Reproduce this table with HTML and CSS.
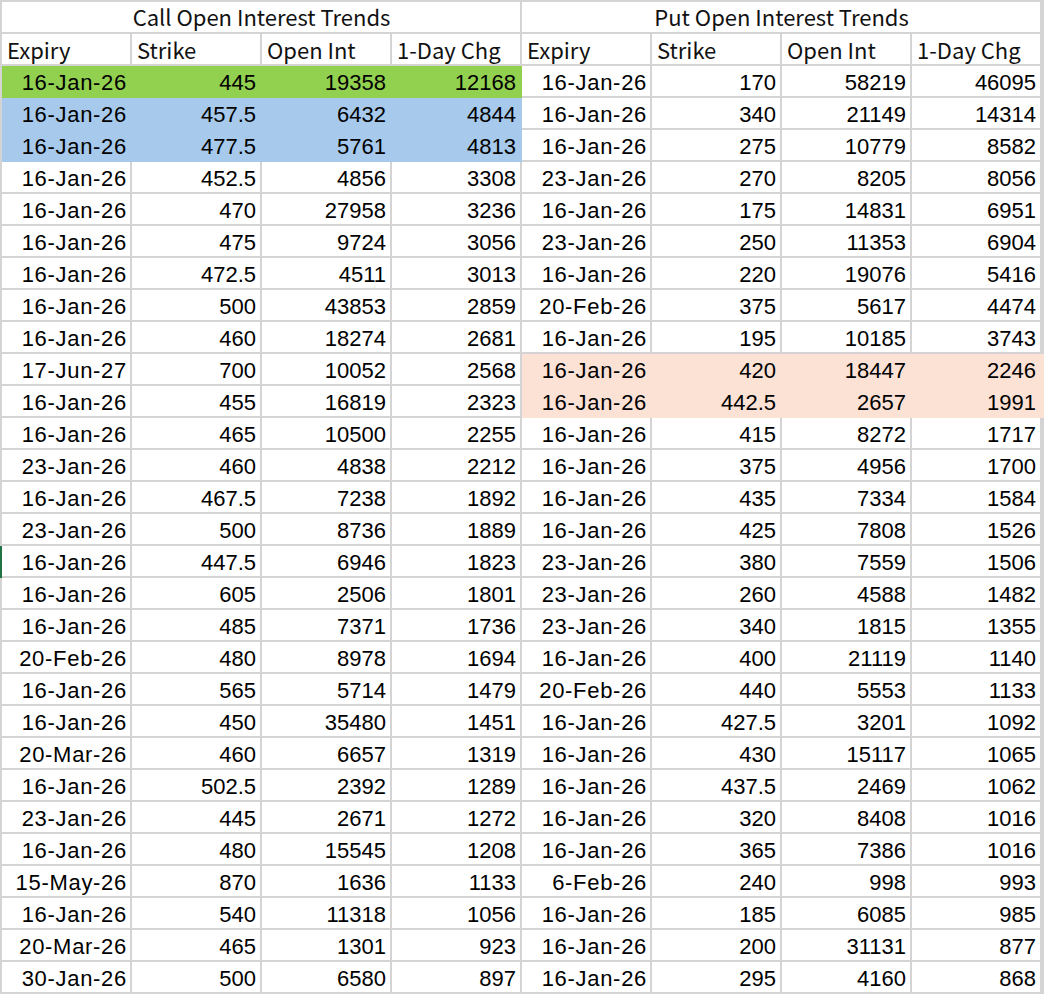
FILE: index.html
```html
<!DOCTYPE html>
<html>
<head>
<meta charset="utf-8">
<link rel="stylesheet" href="styles.css">
</head>
<body>
<table class="sheet">
<colgroup>
<col class="c"><col class="c"><col class="c"><col class="c"><col class="c"><col class="c"><col class="c"><col class="c"><col class="x">
</colgroup>
<tbody id="body">
<tr>
<td class="title" colspan="4">Call Open Interest Trends</td>
<td class="title" colspan="4">Put Open Interest Trends</td>
<td class="e"></td>
</tr>
<tr class="hdr">
<td>Expiry</td><td>Strike</td><td>Open Int</td><td>1-Day Chg</td>
<td>Expiry</td><td>Strike</td><td>Open Int</td><td>1-Day Chg</td><td class="e"></td>
</tr>
<tr>
<td class="d green">16-Jan-26</td><td class="n green">445</td><td class="n green">19358</td><td class="n green">12168</td>
<td class="d">16-Jan-26</td><td class="n">170</td><td class="n">58219</td><td class="n">46095</td><td class="e"></td>
</tr>
<tr>
<td class="d blue">16-Jan-26</td><td class="n blue">457.5</td><td class="n blue">6432</td><td class="n blue">4844</td>
<td class="d">16-Jan-26</td><td class="n">340</td><td class="n">21149</td><td class="n">14314</td><td class="e"></td>
</tr>
<tr>
<td class="d blue">16-Jan-26</td><td class="n blue">477.5</td><td class="n blue">5761</td><td class="n blue">4813</td>
<td class="d">16-Jan-26</td><td class="n">275</td><td class="n">10779</td><td class="n">8582</td><td class="e"></td>
</tr>
<tr><td class="d">16-Jan-26</td><td class="n">452.5</td><td class="n">4856</td><td class="n">3308</td><td class="d">23-Jan-26</td><td class="n">270</td><td class="n">8205</td><td class="n">8056</td><td class="e"></td></tr>
<tr><td class="d">16-Jan-26</td><td class="n">470</td><td class="n">27958</td><td class="n">3236</td><td class="d">16-Jan-26</td><td class="n">175</td><td class="n">14831</td><td class="n">6951</td><td class="e"></td></tr>
<tr><td class="d">16-Jan-26</td><td class="n">475</td><td class="n">9724</td><td class="n">3056</td><td class="d">23-Jan-26</td><td class="n">250</td><td class="n">11353</td><td class="n">6904</td><td class="e"></td></tr>
<tr><td class="d">16-Jan-26</td><td class="n">472.5</td><td class="n">4511</td><td class="n">3013</td><td class="d">16-Jan-26</td><td class="n">220</td><td class="n">19076</td><td class="n">5416</td><td class="e"></td></tr>
<tr><td class="d">16-Jan-26</td><td class="n">500</td><td class="n">43853</td><td class="n">2859</td><td class="d">20-Feb-26</td><td class="n">375</td><td class="n">5617</td><td class="n">4474</td><td class="e"></td></tr>
<tr><td class="d">16-Jan-26</td><td class="n">460</td><td class="n">18274</td><td class="n">2681</td><td class="d">16-Jan-26</td><td class="n">195</td><td class="n">10185</td><td class="n">3743</td><td class="e"></td></tr>
<tr><td class="d">17-Jun-27</td><td class="n">700</td><td class="n">10052</td><td class="n">2568</td><td class="d peach">16-Jan-26</td><td class="n peach">420</td><td class="n peach">18447</td><td class="n peach">2246</td><td class="e peach"></td></tr>
<tr><td class="d">16-Jan-26</td><td class="n">455</td><td class="n">16819</td><td class="n">2323</td><td class="d peach">16-Jan-26</td><td class="n peach">442.5</td><td class="n peach">2657</td><td class="n peach">1991</td><td class="e peach"></td></tr>
<tr><td class="d">16-Jan-26</td><td class="n">465</td><td class="n">10500</td><td class="n">2255</td><td class="d">16-Jan-26</td><td class="n">415</td><td class="n">8272</td><td class="n">1717</td><td class="e"></td></tr>
<tr><td class="d">23-Jan-26</td><td class="n">460</td><td class="n">4838</td><td class="n">2212</td><td class="d">16-Jan-26</td><td class="n">375</td><td class="n">4956</td><td class="n">1700</td><td class="e"></td></tr>
<tr><td class="d">16-Jan-26</td><td class="n">467.5</td><td class="n">7238</td><td class="n">1892</td><td class="d">16-Jan-26</td><td class="n">435</td><td class="n">7334</td><td class="n">1584</td><td class="e"></td></tr>
<tr><td class="d">23-Jan-26</td><td class="n">500</td><td class="n">8736</td><td class="n">1889</td><td class="d">16-Jan-26</td><td class="n">425</td><td class="n">7808</td><td class="n">1526</td><td class="e"></td></tr>
<tr><td class="d sel">16-Jan-26</td><td class="n">447.5</td><td class="n">6946</td><td class="n">1823</td><td class="d">23-Jan-26</td><td class="n">380</td><td class="n">7559</td><td class="n">1506</td><td class="e"></td></tr>
<tr><td class="d">16-Jan-26</td><td class="n">605</td><td class="n">2506</td><td class="n">1801</td><td class="d">23-Jan-26</td><td class="n">260</td><td class="n">4588</td><td class="n">1482</td><td class="e"></td></tr>
<tr><td class="d">16-Jan-26</td><td class="n">485</td><td class="n">7371</td><td class="n">1736</td><td class="d">23-Jan-26</td><td class="n">340</td><td class="n">1815</td><td class="n">1355</td><td class="e"></td></tr>
<tr><td class="d">20-Feb-26</td><td class="n">480</td><td class="n">8978</td><td class="n">1694</td><td class="d">16-Jan-26</td><td class="n">400</td><td class="n">21119</td><td class="n">1140</td><td class="e"></td></tr>
<tr><td class="d">16-Jan-26</td><td class="n">565</td><td class="n">5714</td><td class="n">1479</td><td class="d">20-Feb-26</td><td class="n">440</td><td class="n">5553</td><td class="n">1133</td><td class="e"></td></tr>
<tr><td class="d">16-Jan-26</td><td class="n">450</td><td class="n">35480</td><td class="n">1451</td><td class="d">16-Jan-26</td><td class="n">427.5</td><td class="n">3201</td><td class="n">1092</td><td class="e"></td></tr>
<tr><td class="d">20-Mar-26</td><td class="n">460</td><td class="n">6657</td><td class="n">1319</td><td class="d">16-Jan-26</td><td class="n">430</td><td class="n">15117</td><td class="n">1065</td><td class="e"></td></tr>
<tr><td class="d">16-Jan-26</td><td class="n">502.5</td><td class="n">2392</td><td class="n">1289</td><td class="d">16-Jan-26</td><td class="n">437.5</td><td class="n">2469</td><td class="n">1062</td><td class="e"></td></tr>
<tr><td class="d">23-Jan-26</td><td class="n">445</td><td class="n">2671</td><td class="n">1272</td><td class="d">16-Jan-26</td><td class="n">320</td><td class="n">8408</td><td class="n">1016</td><td class="e"></td></tr>
<tr><td class="d">16-Jan-26</td><td class="n">480</td><td class="n">15545</td><td class="n">1208</td><td class="d">16-Jan-26</td><td class="n">365</td><td class="n">7386</td><td class="n">1016</td><td class="e"></td></tr>
<tr><td class="d">15-May-26</td><td class="n">870</td><td class="n">1636</td><td class="n">1133</td><td class="d">6-Feb-26</td><td class="n">240</td><td class="n">998</td><td class="n">993</td><td class="e"></td></tr>
<tr><td class="d">16-Jan-26</td><td class="n">540</td><td class="n">11318</td><td class="n">1056</td><td class="d">16-Jan-26</td><td class="n">185</td><td class="n">6085</td><td class="n">985</td><td class="e"></td></tr>
<tr><td class="d">20-Mar-26</td><td class="n">465</td><td class="n">1301</td><td class="n">923</td><td class="d">16-Jan-26</td><td class="n">200</td><td class="n">31131</td><td class="n">877</td><td class="e"></td></tr>
<tr><td class="d">30-Jan-26</td><td class="n">500</td><td class="n">6580</td><td class="n">897</td><td class="d">16-Jan-26</td><td class="n">295</td><td class="n">4160</td><td class="n">868</td><td class="e"></td></tr>
</tbody>
</table>
</body>
</html>
```
FILE: styles.css
```css
html, body {
  margin: 0;
  padding: 0;
  background: #ffffff;
  overflow: hidden;
}
body {
  width: 1044px;
  height: 994px;
}
.sheet {
  border-collapse: separate;
  border-spacing: 0;
  table-layout: fixed;
  width: 1044px;
  border-left: 2px solid #d4d4d4;
  border-top: 2px solid #d4d4d4;
  font-family: "Noto Sans CJK SC", "Noto Sans", sans-serif;
  font-weight: 400;
  font-size: 22px;
  color: #111111;
}
.sheet col.c { width: 130px; }
.sheet td {
  height: 30px;
  padding: 0 4px 0 5px;
  border-right: 2px solid #d4d4d4;
  border-bottom: 2px solid #d4d4d4;
  white-space: nowrap;
  overflow: hidden;
  line-height: 30px;
  box-sizing: content-box;
}
.sheet td.e {
  padding: 0;
}
.sheet td.title {
  text-align: center;
  height: 28px;
  line-height: 28px;
  padding-bottom: 2px;
  overflow: visible;
}
.sheet .hdr td {
  text-align: left;
}
.sheet td.d,
.sheet td.n {
  text-align: right;
  font-family: "Liberation Sans", Arial, sans-serif;
  color: #000000;
  height: 26px;
  line-height: 26px;
  padding-top: 4px;
}
.sheet td.d {
  letter-spacing: 0.7px;
  padding-right: 3px;
}
.green {
  background: #92d050;
  border-right-color: #92d050 !important;
  border-bottom-color: #92d050 !important;
}
.blue {
  background: #a6c9ec;
  border-right-color: #a6c9ec !important;
  border-bottom-color: #a6c9ec !important;
}
.peach {
  background: #fbe2d5;
  border-right-color: #fbe2d5 !important;
  border-bottom-color: #fbe2d5 !important;
}
.sel {
  box-shadow: -2px 0 0 #217346;
}
```
